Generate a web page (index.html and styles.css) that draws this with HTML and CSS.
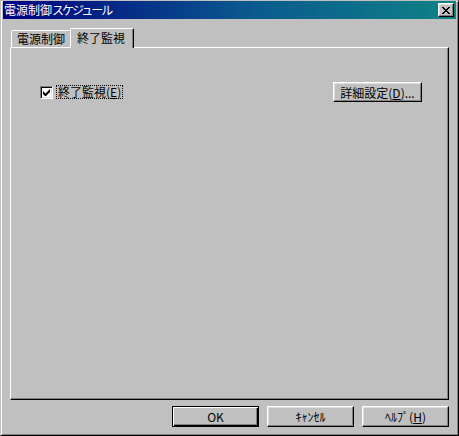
FILE: index.html
```html
<!DOCTYPE html>
<html lang="ja">
<head>
<meta charset="utf-8">
<title>電源制御スケジュール</title>
<link rel="stylesheet" href="styles.css">
</head>
<body>
<div class="window">
  <div class="titlebar">
    <span class="title">電源制御<span class="kana">スケジュール</span></span>
    <span class="close"><svg width="8" height="7" viewBox="0 0 8 7"><path d="M0 0H2L8 7H6Z M6 0H8L2 7H0Z" fill="#000"/></svg></span>
  </div>
  <div class="body">
    <div class="tabs">
      <div class="tab">電源制御</div>
      <div class="tab active">終了監視</div>
    </div>
    <div class="panel">
      <div class="row">
        <label class="check">
          <span class="box"><svg width="7" height="7" viewBox="0 0 7 7"><path d="M0 2L2.5 4.5L7 0V3L2.5 7.5L0 5Z" fill="#000"/></svg></span>
          <span class="label">終了監視(<u>E</u>)</span>
        </label>
        <button class="btn detail">詳細設定(<u>D</u>)...</button>
      </div>
    </div>
    <div class="buttons">
      <button class="btn default">OK</button>
      <button class="btn">ｷｬﾝｾﾙ</button>
      <button class="btn">ﾍﾙﾌﾟ(<u>H</u>)</button>
    </div>
  </div>
</div>
</body>
</html>
```
FILE: styles.css
```css
html, body {
  margin: 0;
  padding: 0;
  background: #c0c0c0;
}

body {
  font-family: "Noto Sans CJK JP", "Noto Sans", sans-serif;
  font-size: 12px;
  color: #000;
}

.window {
  box-sizing: border-box;
  width: 459px;
  height: 436px;
  border: 1px solid;
  border-color: #c0c0c0 #000 #000 #c0c0c0;
  box-shadow: inset 1px 1px #fff, inset -1px -1px #808080;
  padding: 0 2px 2px 2px;
  display: flex;
  flex-direction: column;
  background: #c0c0c0;
}

.titlebar {
  height: 18px;
  flex: none;
  display: flex;
  align-items: center;
  justify-content: space-between;
  background: linear-gradient(90deg, #000080 0%, #0a5a8e 55%, #0e8286 100%);
  color: #fff;
  padding-left: 1px;
}

.title {
  font-size: 12px;
  line-height: 18px;
  white-space: nowrap;
}

.title .kana {
  letter-spacing: -2px;
}

.close {
  box-sizing: border-box;
  width: 16px;
  height: 14px;
  margin-right: 2px;
  background: #c0c0c0;
  border: 1px solid;
  border-color: #fff #000 #000 #fff;
  box-shadow: inset -1px -1px #808080, inset 1px 1px #dfdfdf;
  display: flex;
  align-items: center;
  justify-content: center;
}

.close svg {
  display: block;
  shape-rendering: crispEdges;
}

.body {
  flex: 1;
  display: flex;
  flex-direction: column;
  padding: 9px 7px 6px 7px;
}

.tabs {
  height: 19px;
  display: flex;
  align-items: flex-end;
  padding-left: 1px;
}

.tab {
  box-sizing: border-box;
  height: 17px;
  width: 61px;
  border: 1px solid;
  border-bottom: none;
  border-color: #fff #000 transparent #fff;
  border-radius: 2px 2px 0 0;
  box-shadow: inset -1px 0 #808080;
  padding-left: 5px;
  line-height: 16px;
  white-space: nowrap;
  background: #c0c0c0;
}

.tab.active {
  position: relative;
  z-index: 1;
  width: 64px;
  height: 20px;
  margin-left: -2px;
  margin-bottom: -1px;
  padding-left: 6px;
  line-height: 17px;
}

.panel {
  box-sizing: border-box;
  height: 353px;
  border: 1px solid;
  border-color: #fff #000 #000 #fff;
  box-shadow: inset -1px -1px #808080;
  padding: 34px 26px 0 29px;
}

.row {
  height: 20px;
  display: flex;
  align-items: center;
  justify-content: space-between;
}

.check {
  display: flex;
  align-items: center;
}

.box {
  box-sizing: border-box;
  width: 13px;
  height: 13px;
  background: #fff;
  border: 1px solid;
  border-color: #808080 #fff #fff #808080;
  box-shadow: inset 1px 1px #000, inset -1px -1px #dfdfdf;
  display: flex;
  align-items: center;
  justify-content: center;
}

.box svg {
  display: block;
}

.label {
  margin-left: 4px;
  padding: 0 1px;
  line-height: 12px;
  outline: 1px dotted #000;
  outline-offset: 0;
  white-space: nowrap;
}

u {
  text-underline-offset: 1px;
}

.btn {
  box-sizing: border-box;
  width: 87px;
  height: 21px;
  padding: 0;
  margin: 0;
  background: #c0c0c0;
  border: 1px solid;
  border-color: #fff #000 #000 #fff;
  box-shadow: inset -1px -1px #808080, inset 1px 1px #dfdfdf;
  font-family: "Noto Sans CJK JP", "Noto Sans", sans-serif;
  font-size: 12px;
  color: #000;
  line-height: 17px;
  white-space: nowrap;
}

.btn.detail {
  width: 89px;
  height: 20px;
}

.btn.default {
  border-color: #000;
  box-shadow: inset 1px 1px #fff, inset -1px -1px #000, inset -2px -2px #808080;
}

.buttons {
  margin-top: 6px;
  display: flex;
  justify-content: flex-end;
  gap: 8px;
}
```
